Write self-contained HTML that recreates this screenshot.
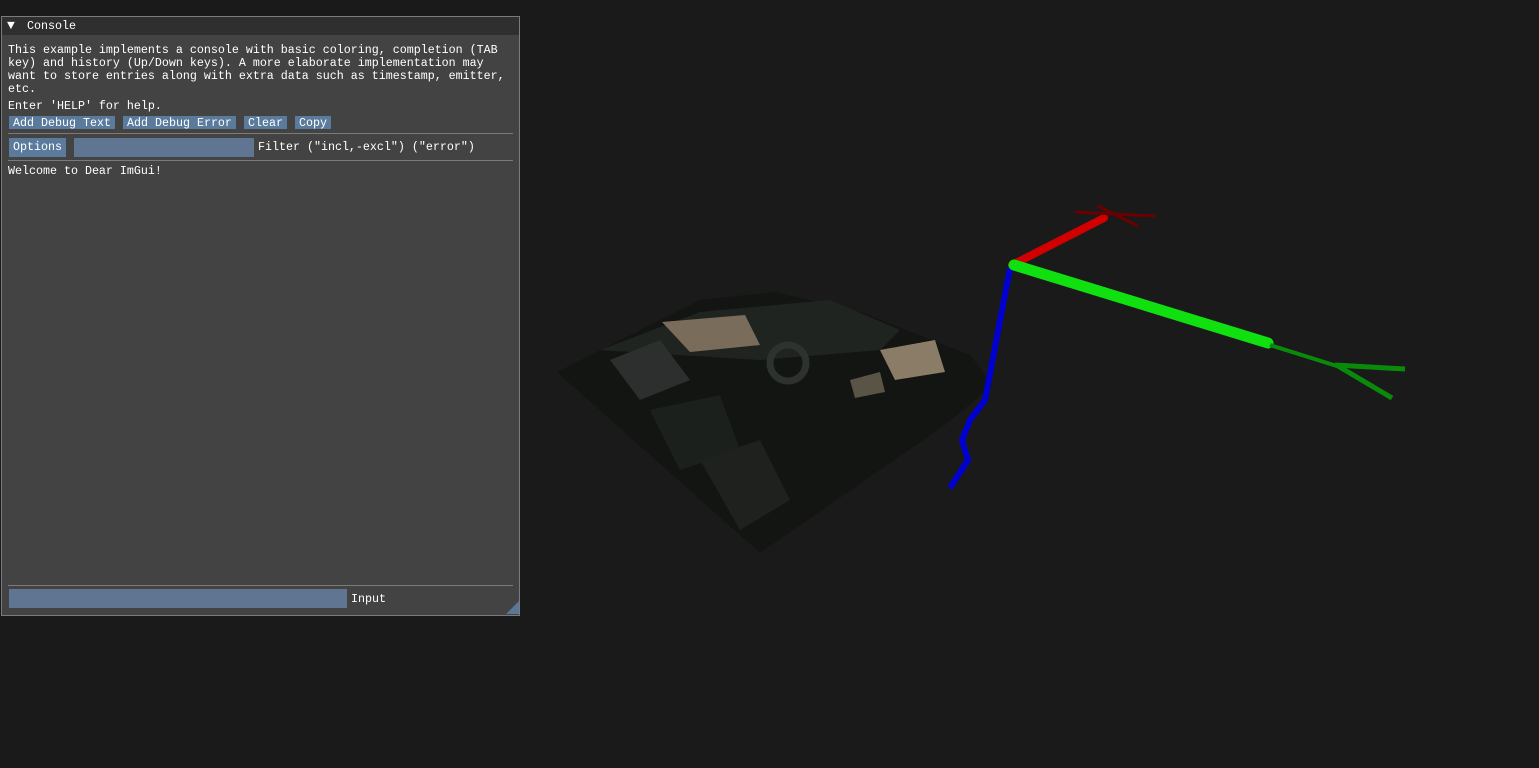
<!DOCTYPE html>
<html><head><meta charset="utf-8"><style>
body{margin:0;width:1539px;height:768px;background:#1a1a1a;overflow:hidden;position:relative;font-family:"Liberation Mono",monospace;font-size:11.67px;color:#fff}
.win{position:absolute;left:1px;top:16px;width:517px;height:598px;background:#434343;border:1px solid #7a7a80}
.title{position:absolute;left:0;top:0;width:517px;height:18px;background:#2f2f2f}
.t{position:absolute;white-space:pre;line-height:13px}
.btn{position:absolute;background:#5a7b9c;height:13px}
.inp{position:absolute;background:#5f7592}
.sep{position:absolute;left:6px;width:505px;height:1px;background:#7a7a7a}
</style></head><body>
<svg style="position:absolute;left:0;top:0" width="1539" height="768">
<polygon points="557,372 700,300 775,292 860,312 970,355 993,385 945,425 760,553" fill="#121511"/>
<polygon points="600,350 700,312 830,300 900,330 880,350 760,360" fill="#202420"/>
<polygon points="662,322 745,315 760,345 690,352" fill="#7a6c5a"/>
<polygon points="880,350 935,340 945,372 895,380" fill="#8a7c66"/>
<polygon points="850,380 880,372 885,392 855,398" fill="#5a5446"/>
<circle cx="788" cy="363" r="18" fill="none" stroke="#2e322e" stroke-width="7"/>
<polygon points="610,360 660,340 690,380 640,400" fill="#2c2f2d"/>
<polygon points="650,410 720,395 740,450 680,470" fill="#1c201c"/>
<polygon points="700,460 760,440 790,500 740,530" fill="#1e211d"/>
<line x1="1012" y1="265" x2="1104" y2="218" stroke="#d00000" stroke-width="8" stroke-linecap="round"/>
<line x1="1075" y1="212" x2="1155" y2="216" stroke="#6a0000" stroke-width="3"/>
<line x1="1098" y1="206" x2="1138" y2="226" stroke="#6a0000" stroke-width="3"/>
<polyline points="1010,268 985,400 970,420 962,440 968,460 950,488" fill="none" stroke="#0000d0" stroke-width="6"/>
<line x1="1014" y1="265" x2="1268" y2="343" stroke="#10e010" stroke-width="11" stroke-linecap="round"/>
<line x1="1270" y1="345" x2="1340" y2="367" stroke="#0a8a0a" stroke-width="4"/>
<line x1="1335" y1="365" x2="1405" y2="369" stroke="#0a8a0a" stroke-width="5"/>
<line x1="1338" y1="366" x2="1392" y2="398" stroke="#0a8a0a" stroke-width="5"/>
</svg>
<div class="win">
<div class="title"></div>
<div class="t" style="left:5px;top:2px;font-size:13px">▼</div>
<div class="t" style="left:25px;top:3px">Console</div>
<div class="t" style="left:6px;top:27px">This example implements a console with basic coloring, completion (TAB
key) and history (Up/Down keys). A more elaborate implementation may
want to store entries along with extra data such as timestamp, emitter,
etc.</div>
<div class="t" style="left:6px;top:83px">Enter 'HELP' for help.</div>
<div class="btn" style="left:7px;top:99px;width:106px"></div>
<div class="btn" style="left:121px;top:99px;width:113px"></div>
<div class="btn" style="left:242px;top:99px;width:43px"></div>
<div class="btn" style="left:293px;top:99px;width:36px"></div>
<div class="t" style="left:11px;top:100px">Add Debug Text</div>
<div class="t" style="left:125px;top:100px">Add Debug Error</div>
<div class="t" style="left:246px;top:100px">Clear</div>
<div class="t" style="left:297px;top:100px">Copy</div>
<div class="sep" style="top:116px"></div>
<div class="btn" style="left:7px;top:121px;width:57px;height:19px"></div>
<div class="t" style="left:11px;top:124px">Options</div>
<div class="inp" style="left:72px;top:121px;width:180px;height:19px"></div>
<div class="t" style="left:256px;top:124px">Filter ("incl,-excl") ("error")</div>
<div class="sep" style="top:143px"></div>
<div class="t" style="left:6px;top:148px">Welcome to Dear ImGui!</div>
<div class="sep" style="top:568px"></div>
<div class="inp" style="left:7px;top:572px;width:338px;height:19px"></div>
<div class="t" style="left:349px;top:576px">Input</div>
<svg style="position:absolute;left:504px;top:584px" width="13" height="13"><polygon points="13,0 13,13 0,13" fill="#5a7896"/></svg>
</div>
</body></html>
